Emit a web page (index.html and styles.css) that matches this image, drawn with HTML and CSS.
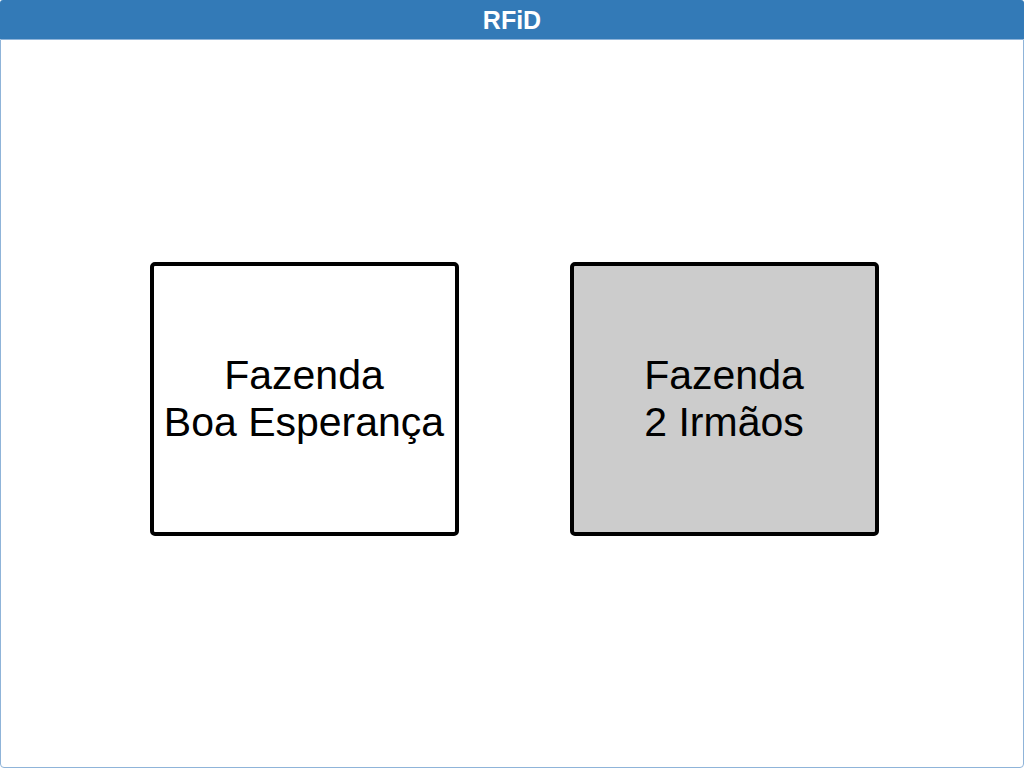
FILE: index.html
```html
<!DOCTYPE html>
<html lang="pt-BR">
<head>
<meta charset="utf-8">
<meta name="viewport" content="width=device-width, initial-scale=1">
<title>RFiD</title>
<link rel="stylesheet" href="styles.css">
</head>
<body>
<div class="panel">
  <header class="panel-header"><h1 class="panel-title">RFiD</h1></header>
  <main class="choices">
    <button type="button" class="farm">Fazenda<br>Boa Esperança</button>
    <button type="button" class="farm farm-selected">Fazenda<br>2 Irmãos</button>
  </main>
</div>
</body>
</html>
```
FILE: styles.css
```css
* {
  box-sizing: border-box;
}

body {
  margin: 0;
  background: #fff;
  color: #000;
  font-family: "Liberation Sans", Arial, sans-serif;
}

.panel {
  display: flex;
  flex-direction: column;
  min-height: 100vh;
}

.panel-header {
  padding: 5px 16px 4px;
  border-radius: 3px 3px 0 0;
  background: #337ab7;
  color: #fff;
  text-align: center;
}

.panel-title {
  margin: 0;
  font-size: 25px;
  line-height: 30px;
}

.choices {
  flex: 1;
  display: flex;
  flex-wrap: wrap;
  align-items: center;
  justify-content: center;
  gap: 111px;
  padding: 0 0 9px 4px;
  border: 1px solid #8fb4d9;
  border-radius: 0 0 4px 4px;
}

.farm {
  width: 309px;
  min-height: 274px;
  padding: 0;
  border: 4px solid #000;
  border-radius: 5px;
  background: #fff;
  color: #000;
  font-family: inherit;
  font-size: 41px;
  line-height: 47px;
  text-align: center;
}

.farm-selected {
  background: #ccc;
}
```
